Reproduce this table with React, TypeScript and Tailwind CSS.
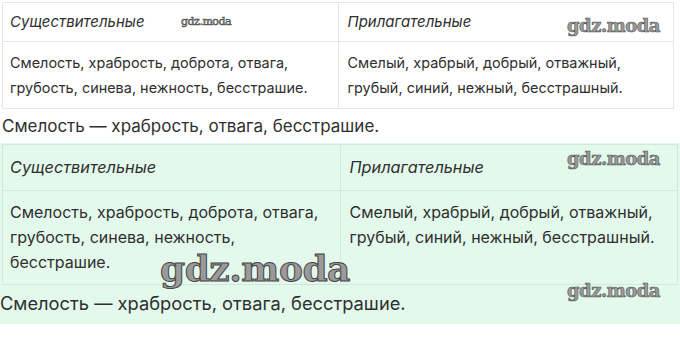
const sans = "font-['Inter','Noto_Sans',sans-serif]";

function Watermark({ className }: { className: string }) {
  return (
    <span
      className={`pointer-events-none absolute font-['DejaVu_Serif','Liberation_Serif',serif] font-bold leading-none tracking-[-0.5px] text-[#9a9a9a] [-webkit-text-stroke:0.6px_#555] ${className}`}
    >
      gdz.moda
    </span>
  );
}

interface TableProps {
  size: 'sm' | 'md';
}

function WordsTable({ size }: TableProps) {
  const md = size === 'md';
  const cell = md ? 'border border-[#cfe9da]' : 'border border-[#e6e6e6]';
  const head = md ? 'text-[16.3px]' : 'text-[15px]';
  const body = md ? 'py-[9px] text-[16px]' : 'py-[8px] text-[14.45px]';
  return (
    <table className={`w-full table-fixed border-collapse text-[#2f2f2f] ${cell}`}>
      <tbody>
        <tr className={md ? 'h-[46px]' : 'h-[39px]'}>
          <td className={`px-[7px] italic ${head} ${cell}`}>Существительные</td>
          <td className={`px-[9px] italic ${head} ${cell}`}>Прилагательные</td>
        </tr>
        <tr>
          <td className={`px-[7px] align-top leading-[25px] ${body} ${cell}`}>
            {md ? (
              <>
                Смелость, храбрость, доброта, отвага,
                <br />
                грубость, синева, нежность,
                <br />
                бесстрашие.
              </>
            ) : (
              <>
                Смелость, храбрость, доброта, отвага,
                <br />
                грубость, синева, нежность, бесстрашие.
              </>
            )}
          </td>
          <td className={`px-[9px] align-top leading-[25px] ${body} ${cell}`}>
            Смелый, храбрый, добрый, отважный,
            <br />
            грубый, синий, нежный, бесстрашный.
          </td>
        </tr>
      </tbody>
    </table>
  );
}

export default function App() {
  return (
    <div className={`relative h-[357px] w-[680px] overflow-hidden bg-white ${sans}`}>
      <div className="pl-[2px] pr-[6px] pt-[2px]">
        <WordsTable size="sm" />
      </div>
      <p className="mt-[5px] pl-[2px] text-[17px] leading-[25px] text-[#2f2f2f]">
        Смелость — храбрость, отвага, бесстрашие.
      </p>

      <div className="mt-[4px] bg-[#e3f9ec] pb-[8px] pt-[1px]">
        <div className="px-[2px]">
          <WordsTable size="md" />
        </div>
        <p className="mt-[6px] text-[18.3px] leading-[25px] text-[#2f2f2f]">
          Смелость — храбрость, отвага, бесстрашие.
        </p>
      </div>

      <Watermark className="left-[181px] top-[16px] text-[11px] font-normal [-webkit-text-stroke:0.2px_#777]" />
      <Watermark className="left-[567px] top-[17px] text-[18px]" />
      <Watermark className="left-[567px] top-[150px] text-[18px]" />
      <Watermark className="left-[160px] top-[250px] text-[36px] [-webkit-text-stroke:1px_#444]" />
      <Watermark className="left-[567px] top-[282px] text-[18px]" />
    </div>
  );
}
